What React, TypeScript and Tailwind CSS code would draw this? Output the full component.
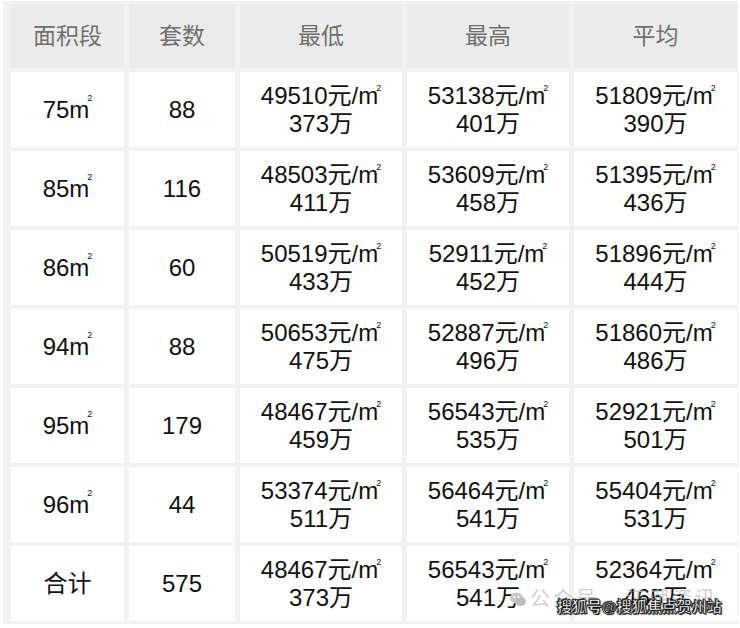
import React from 'react';

interface PriceRow {
  area: string;
  count: string;
  low: [string, string];
  high: [string, string];
  avg: [string, string];
}

const rows: PriceRow[] = [
  { area: '75', count: '88', low: ['49510', '373'], high: ['53138', '401'], avg: ['51809', '390'] },
  { area: '85', count: '116', low: ['48503', '411'], high: ['53609', '458'], avg: ['51395', '436'] },
  { area: '86', count: '60', low: ['50519', '433'], high: ['52911', '452'], avg: ['51896', '444'] },
  { area: '94', count: '88', low: ['50653', '475'], high: ['52887', '496'], avg: ['51860', '486'] },
  { area: '95', count: '179', low: ['48467', '459'], high: ['56543', '535'], avg: ['52921', '501'] },
  { area: '96', count: '44', low: ['53374', '511'], high: ['56464', '541'], avg: ['55404', '531'] },
];

const total: PriceRow = {
  area: '合计',
  count: '575',
  low: ['48467', '373'],
  high: ['56543', '541'],
  avg: ['52364', '465'],
};

const headers = ['面积段', '套数', '最低', '最高', '平均'];

const Sq = () => (
  <>
    m<span className="inline-block align-top text-[9px] leading-none -ml-[2px] mt-[2px]">2</span>
  </>
);

const Price: React.FC<{ v: [string, string] }> = ({ v }) => (
  <div className="leading-[28px]">
    <div>
      {v[0]}元/<Sq />
    </div>
    <div>{v[1]}万</div>
  </div>
);

const Cell: React.FC<{ children: React.ReactNode }> = ({ children }) => (
  <div className="bg-white h-[75px] flex items-center justify-center text-center text-[24px] text-[#111]">
    {children}
  </div>
);

const WechatIcon = () => (
  <svg width="16" height="15" viewBox="0 0 16 15" className="mr-[4px] shrink-0">
    <ellipse cx="6.5" cy="6" rx="6.5" ry="5.5" fill="#c9c9c9" />
    <ellipse cx="10.5" cy="9.5" rx="5.5" ry="4.5" fill="#bdbdbd" />
    <circle cx="4.5" cy="5" r="0.9" fill="#fff" />
    <circle cx="8.5" cy="5" r="0.9" fill="#fff" />
  </svg>
);

export default function App() {
  return (
    <div
      className="w-[740px] h-[628px] bg-white relative overflow-hidden"
      style={{ fontFamily: '"Liberation Sans", "Noto Sans CJK SC", sans-serif' }}
    >
      <div className="ml-[3px] mt-[1px] w-[735px] bg-[#f2f2f2] pl-[8px] pt-[3px] pr-[1px] pb-[3px]">
        <div className="grid grid-cols-[113px_106px_162px_162px_163px] gap-x-[5px] gap-y-[4px]">
          {headers.map((h) => (
            <div
              key={h}
              className="bg-[#ebebeb] h-[64px] flex items-center justify-center text-[23px] text-[#707070]"
            >
              {h}
            </div>
          ))}

          {rows.map((r) => (
            <React.Fragment key={r.area}>
              <Cell>
                <span>
                  {r.area}
                  <Sq />
                </span>
              </Cell>
              <Cell>{r.count}</Cell>
              <Cell>
                <Price v={r.low} />
              </Cell>
              <Cell>
                <Price v={r.high} />
              </Cell>
              <Cell>
                <Price v={r.avg} />
              </Cell>
            </React.Fragment>
          ))}

          <Cell>{total.area}</Cell>
          <Cell>{total.count}</Cell>
          <Cell>
            <Price v={total.low} />
          </Cell>
          <Cell>
            <Price v={total.high} />
          </Cell>
          <Cell>
            <Price v={total.avg} />
          </Cell>
        </div>
      </div>

      {/* faint account watermark */}
      <div className="absolute left-[510px] top-[588px] flex items-center whitespace-nowrap text-[20px] leading-[22px] text-[#c4c4c4]/80 tracking-[3px] pointer-events-none">
        <WechatIcon />
        <span>公众号 · 江潮资讯</span>
      </div>

      {/* sohu watermark */}
      <div className="absolute left-[557px] top-[597px] whitespace-nowrap text-[15px] font-bold text-white leading-[20px] [-webkit-text-stroke:0.6px_#222] [text-shadow:0_0_1px_#000,1px_1px_1px_#000,-1px_-1px_1px_#000]">
        搜狐号@搜狐焦点贺州站
      </div>
    </div>
  );
}
